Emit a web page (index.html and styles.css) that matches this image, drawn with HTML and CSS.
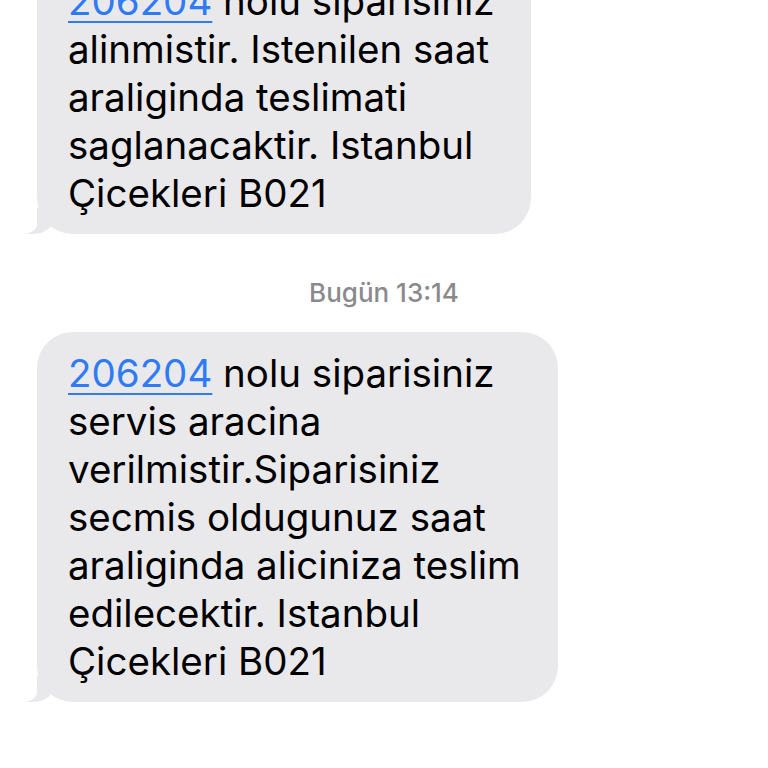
FILE: index.html
```html
<!DOCTYPE html>
<html lang="tr">
<head>
    <meta charset="UTF-8">
    <meta name="viewport" content="width=device-width, initial-scale=1.0">
    <title>Mesajlar</title>
    <link rel="stylesheet" href="styles.css">
</head>
<body>
    <div class="thread">
        <!-- Earlier message, scrolled partly out of view -->
        <div class="bubble">
            <a href="#" class="order-link">206204</a> nolu siparisiniz<br>
            alinmistir. Istenilen saat<br>
            araliginda teslimati<br>
            saglanacaktir. Istanbul<br>
            Çicekleri B021
        </div>

        <div class="timestamp">Bugün 13:14</div>

        <div class="bubble">
            <a href="#" class="order-link">206204</a> nolu siparisiniz<br>
            servis aracina<br>
            verilmistir.Siparisiniz<br>
            secmis oldugunuz saat<br>
            araliginda aliciniza teslim<br>
            edilecektir. Istanbul<br>
            Çicekleri B021
        </div>
    </div>
</body>
</html>
```

FILE: styles.css
```css
body {
    margin: 0;
    background: #fff;
    font-family: "Inter", "Liberation Sans", sans-serif;
    overflow: hidden;
}

.thread {
    display: flex;
    flex-direction: column;
    align-items: flex-start;
    padding: 0 0 0 37px;
    margin-top: -40px;
}

/* Incoming message bubble */
.bubble {
    position: relative;
    background-color: #e9e9eb;
    color: #000;
    font-size: 38.5px;
    line-height: 48px;
    padding: 17px 37px 17px 31px;
    border-radius: 36px;
    width: fit-content;
}

.bubble::before {
    content: "";
    position: absolute;
    bottom: 0;
    left: -12px;
    width: 30px;
    height: 26px;
    background: #e9e9eb;
    border-bottom-right-radius: 22px 18px;
}

.bubble::after {
    content: "";
    position: absolute;
    bottom: 0;
    left: -30px;
    width: 30px;
    height: 28px;
    background: #fff;
    border-bottom-right-radius: 14px 10px;
}

.order-link {
    color: #2f7bf5;
    text-decoration: underline;
    text-underline-offset: 6px;
    text-decoration-thickness: 2px;
}

.timestamp {
    align-self: center;
    margin: 44px 0 24px -37px;
    color: #8a8a8e;
    font-size: 26px;
    font-weight: 500;
    line-height: 30px;
}
```
